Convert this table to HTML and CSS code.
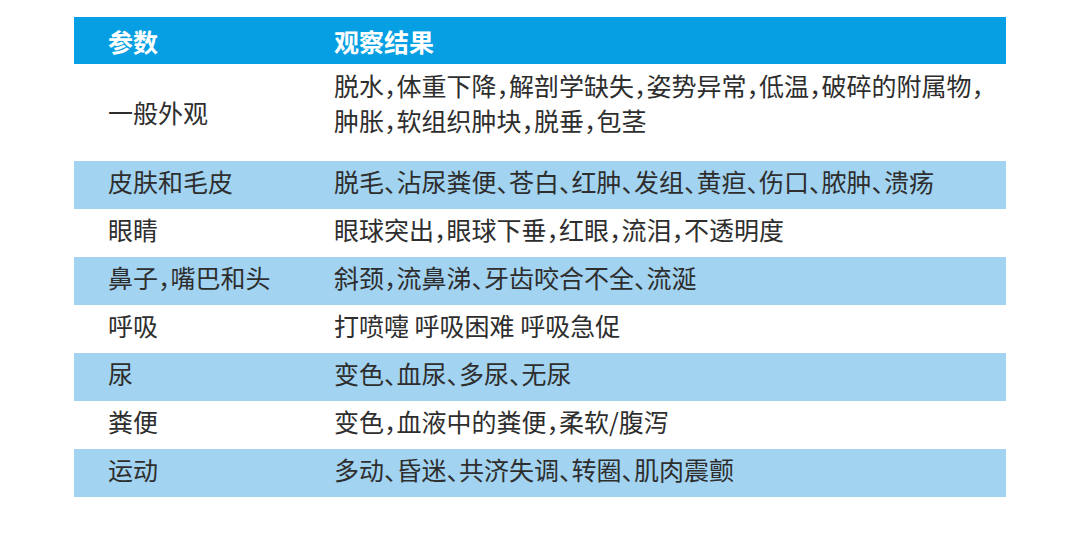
FILE: index.html
```html
<!DOCTYPE html>
<html lang="zh-CN">
<head>
<meta charset="utf-8">
<link rel="stylesheet" href="styles.css">
</head>
<body>
<div class="table">
  <div class="row head">
    <div class="c1">参数</div>
    <div class="c2">观察结果</div>
  </div>
  <div class="row first">
    <div class="c1">一般外观</div>
    <div class="c2 multi">脱水，体重下降，解剖学缺失，姿势异常，低温，破碎的附属物，<br>肿胀，软组织肿块，脱垂，包茎</div>
  </div>
  <div class="row alt">
    <div class="c1">皮肤和毛皮</div>
    <div class="c2">脱毛、沾尿粪便、苍白、红肿、发组、黄疸、伤口、脓肿、溃疡</div>
  </div>
  <div class="row">
    <div class="c1">眼睛</div>
    <div class="c2">眼球突出，眼球下垂，红眼，流泪，不透明度</div>
  </div>
  <div class="row alt">
    <div class="c1">鼻子，嘴巴和头</div>
    <div class="c2">斜颈，流鼻涕、牙齿咬合不全、流涎</div>
  </div>
  <div class="row">
    <div class="c1">呼吸</div>
    <div class="c2">打喷嚏 呼吸困难 呼吸急促</div>
  </div>
  <div class="row alt">
    <div class="c1">尿</div>
    <div class="c2">变色、血尿、多尿、无尿</div>
  </div>
  <div class="row">
    <div class="c1">粪便</div>
    <div class="c2">变色，血液中的粪便，柔软/腹泻</div>
  </div>
  <div class="row alt">
    <div class="c1">运动</div>
    <div class="c2">多动、昏迷、共济失调、转圈、肌肉震颤</div>
  </div>
</div>
</body>
</html>
```

FILE: styles.css
```css
html, body {
  margin: 0;
  padding: 0;
  background: #ffffff;
}
body {
  font-family: "Noto Sans CJK SC", "Noto Sans", sans-serif;
  color: #2e2e2e;
  font-size: 25px;
}
.table {
  margin: 17px 0 0 74px;
  width: 932px;
}
.row {
  display: grid;
  grid-template-columns: 260px 1fr;
  height: 48px;
  align-items: center;
  padding-bottom: 6px;
  box-sizing: border-box;
  line-height: 1.35;
  font-feature-settings: "halt";
  white-space: nowrap;
}
.row .c1 {
  padding-left: 34px;
}
.row.alt {
  background: #a2d4f2;
}
.row.head {
  height: 47px;
  background: #079fe3;
  color: #ffffff;
  font-weight: 700;
  padding-bottom: 0;
  padding-top: 3px;
}
.row.first {
  height: 97px;
  padding-bottom: 0;
}
.row.first .c2 {
  align-self: start;
  padding-top: 4px;
  line-height: 35px;
}
```
